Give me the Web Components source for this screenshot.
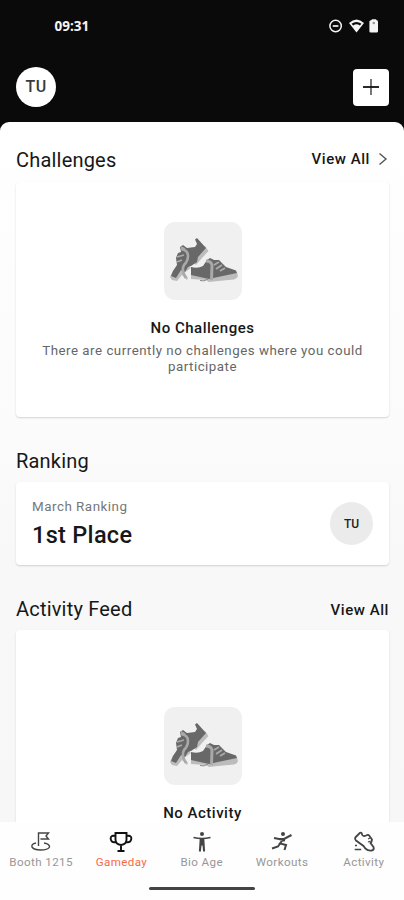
<!DOCTYPE html>
<html lang="en">
<head>
<meta charset="utf-8">
<title>Gameday</title>
<style>
html,body{margin:0;height:900px;overflow:hidden;background:#0a0a0a}
body{font-family:Roboto,"Liberation Sans",sans-serif;color:#171717}
</style>
</head>
<body>
<game-app></game-app>
<script>
const define = (name, css, html) => customElements.define(name, class extends HTMLElement {
  constructor() {
    super();
    const markup = typeof html === 'function' ? html(this) : html;
    this.attachShadow({mode: 'open'}).innerHTML = `<style>*{box-sizing:border-box}${css}</style>${markup}`;
  }
});

define('status-bar', `
:host{display:flex;height:53px;padding:0 25px 1px 54.500px;align-items:center;justify-content:space-between;color:#f4f4f4}
time{font:700 13.500px/16px "Open Sans",sans-serif;letter-spacing:0}
svg{display:block}
`, `<time>09:31</time>
<svg width="51" height="16" viewBox="0 0 51 16" fill="none" stroke="#f4f4f4">
<circle cx="7.600" cy="8" r="5.700" stroke-width="1.500"/><path d="M4.800 8h5.600" stroke-width="1.700"/>
<path d="M21 5.100Q28.500 -2 36 5.100L28.500 14.500Z" fill="#f4f4f4" stroke="none"/>
<path d="M23.500 5.800Q28.500 2.200 33.500 5.800L31.800 7.500Q28.500 5.200 25.200 7.500Z" fill="#0a0a0a" stroke="none"/>
<path d="M42.500 3q1-1 2-1v-.8h4.500V2q1.800 0 1.800 1.800v9.400q0 1.300-1.300 1.300h-6q-1.300 0-1.300-1.300V3Z" fill="#f4f4f4" stroke="none" transform="translate(-.8 0)"/>
<circle cx="45.800" cy="5" r="1.300" fill="#999" stroke="none"/></svg>`);

define('user-avatar', `
:host{display:grid;place-items:center;border-radius:50%;width:40px;height:40px;background:#fff;color:#3a3a3a;font:500 16px/20px Roboto,sans-serif;letter-spacing:.3px}
:host([small]){width:43px;height:43px;background:#ebebeb;font-size:12px;letter-spacing:0;color:#222}
`, `<slot></slot>`);

define('top-bar', `
:host{display:flex;height:69px;padding:14px 15px 15px 16px;justify-content:space-between;align-items:center}
button{width:36px;height:37px;border:0;border-radius:4px;background:#fff;padding:0;display:grid;place-items:center}
`, `<user-avatar>TU</user-avatar><button aria-label="Add"><svg width="18" height="18" viewBox="0 0 18 18"><path d="M9 1v16" stroke="#777" stroke-width="2"/><path d="M1 9h16" stroke="#111" stroke-width="1.800"/></svg></button>`);

define('section-head', `
:host{display:flex;justify-content:space-between;align-items:center;height:28px;padding:0 15px 0 16px}
h2{margin:0;font:400 20px/28px Roboto,sans-serif;letter-spacing:.2px}
a{display:flex;align-items:center;font:500 15px/20px Roboto,sans-serif;letter-spacing:.55px;gap:8px;margin-top:2px}
:host([link=arrow]) a{margin-top:-2px}
svg{display:block}
`, el => `<h2><slot></slot></h2>${el.hasAttribute('link') ? `<a>View All${el.getAttribute('link') === 'arrow' ? '<svg width="11" height="14" viewBox="0 0 11 14"><path d="M1.500 1.500L8 7L1.500 12.500" fill="none" stroke="#555" stroke-width="1.400"/></svg>' : ''}</a>` : ''}`);

define('shoe-art', `
:host{display:grid;place-items:center;width:78px;height:78px;border-radius:11px;background:#f0f0f0}
svg{display:block}
`, `<svg width="78" height="78" viewBox="0 0 78 78">
<path d="M41 24L44.500 29L38 36L32 43L28 39ZM9 49L6 55L8 58L13 59L18 53L23 58L24 56L20 51L27 46L18 38Z" fill="#bdbdbd"/>
<path d="M31 17.500L33 16L42 26L34 35L33 40L27 44L24 45L21 50L17 48L12 56L7 54L9 49L13 43L12 36L14 31L17 30L16 25L19 23L23 26L31 25L33 22Z" fill="#686868"/>
<path d="M17 27Q24 28 24 34Q24 39 20 43Q17 48 22 56" fill="none" stroke="#a9a9a9" stroke-width="2.600"/>
<path d="M13 35L20 33M13 40L18 38M17 25L21 27" stroke="#aaa" stroke-width="1.800"/>
<path d="M27 52L53 54L73 50.500L74 54Q73 57 70 57.500L54 59L45 60L42 58L27 57Z" fill="#bcbcbc"/>
<path d="M27 45Q34 47 39 44L43 38L46 36L50 38L55 38L62 45L72 48.500L73 51L54 55L45 57L27 53Z" fill="#686868"/>
<path d="M42 39Q47 39 48 43L47.500 58" fill="none" stroke="#a9a9a9" stroke-width="3"/>
<path d="M50 43L55 40M52 47L58 43M56 49L61 46" stroke="#aaa" stroke-width="1.900"/>
<path d="M36 58.500Q40 60 44 57" stroke="#888" fill="none"/></svg>`);

define('surface-card', `
:host{display:block;margin:0 15px 0 16px;background:#fff;border-radius:4px;box-shadow:0 1px 2px rgba(0,0,0,.16)}
`, `<slot></slot>`);

define('empty-state', `
:host{display:flex;flex-direction:column;align-items:center;text-align:center}
h3{margin:18px 0 0;font:500 15px/20px Roboto,sans-serif;letter-spacing:.5px}
p{margin:5px 20px 0;font:400 13.300px/16px Roboto,sans-serif;letter-spacing:.52px;color:#666}
`, `<shoe-art></shoe-art><h3><slot name="title"></slot></h3><p><slot></slot></p>`);

define('rank-row', `
:host{display:flex;height:83px;padding:0 16px;align-items:center;justify-content:space-between}
small{display:block;font:400 13.400px/18px Roboto,sans-serif;letter-spacing:.5px;color:#777}
b{display:block;font:500 23.500px/28px Roboto,sans-serif;letter-spacing:.3px;margin-top:5px}
`, `<div><small><slot name="period"></slot></small><b><slot></slot></b></div><user-avatar small>TU</user-avatar>`);

const icons = {
  flag: '<path d="M9.500 15V2h10l-2.500 3L19.500 8h-8M9.500 2v13M7 12Q2 13 3 16Q5 19 11.500 19Q19 19 20.500 16Q21 13 15 12"/>',
  cup: '<path d="M6.500 2h11v6.500q0 5-5.500 5.500q-5.500-.5-5.500-5.500ZM6.500 4.500L3 5q-2 1-1 4q1 3 5 2M17.500 4.500L21 5q2 1 1 4q-1 3-5 2M12 14v6M8.500 20h7" stroke-width="1.900"/>',
  person: '<circle cx="12" cy="3" r="2" fill="#444" stroke="none"/><path d="M3.500 6.500Q12 8.500 20.500 6.500" stroke-width="1.600"/><path d="M9.700 7.500h4.600l.8 13h-2l-.6-6h-1l-.6 6h-2Z" fill="#444" stroke="none"/>',
  run: '<circle cx="13" cy="3" r="2" fill="#444" stroke="none"/><path d="M4 7L9 8L14 8L21.500 4M13 8.500L10 12.500L16 14L14.500 19M10 12.500L8 15.500L2 17.500M9 8L15 9.500" stroke-width="2"/>',
  shoe: '<path d="M3.300 6.500L8 1.800Q10 1 10 3.500Q11 6 14 4.500Q16.500 3 17.500 5L20 8.500Q20 10.500 18.500 12L21.500 16Q22.500 18.500 20 19.500Q16 20 13.300 17.500L11.500 15L4 9.500Q2.500 8 3.300 6.500Z" stroke-width="1.800"/><path d="M16 8L18 7M16 11L18.500 10" stroke-width="1.100"/><path d="M3 14.500h2M2.700 18.500h6.500" stroke-width="1.700"/>'
};
define('nav-item', `
:host{display:flex;flex:1;flex-direction:column;align-items:center;color:#979797;font:400 11.600px/14px Roboto,sans-serif;letter-spacing:.4px;white-space:nowrap}
:host([active]){color:#f56b4a}
svg{display:block;margin-bottom:2px;fill:none;stroke:#444;stroke-width:1.400}
:host([active]) svg{stroke:#111}
`, el => `<svg width="24" height="22" viewBox="0 0 24 22">${icons[el.getAttribute('icon')]}</svg><slot></slot>`);

define('bottom-nav', `
:host{display:flex;flex-direction:column;height:78px;background:#fefefe;padding-top:8.500px;align-items:center}
nav{display:flex;width:404px;height:55.500px;padding-left:1px}
nav-item:last-child{padding-left:1.500px}
i{display:block;width:106px;height:3.500px;margin-top:.5px;border-radius:2px;background:#444}
`, `<nav><nav-item icon="flag">Booth 1215</nav-item><nav-item icon="cup" active>Gameday</nav-item><nav-item icon="person">Bio Age</nav-item><nav-item icon="run">Workouts</nav-item><nav-item icon="shoe">Activity</nav-item></nav><i></i>`);

define('game-app', `
:host{display:flex;flex-direction:column;width:404px;height:900px;background:#0a0a0a}
main{flex:1;min-height:0;overflow:hidden;border-radius:9px 9px 0 0;background:linear-gradient(#fff 0,#fdfdfd 120px,#fbfbfb 310px,#f8f8f8 430px,#f7f7f7);padding-top:24px}
.challenge{height:235px;padding-top:40px;margin-top:8px}
.rank{margin-top:7px}
.feed{height:300px;padding-top:77px;margin-top:7px}
.second{margin-top:30px}
.third{margin-top:30px}
`, `<status-bar></status-bar><top-bar></top-bar>
<main>
<section-head link="arrow">Challenges</section-head>
<surface-card class="challenge"><empty-state><span slot="title">No Challenges</span>There are currently no challenges where you could participate</empty-state></surface-card>
<section-head class="second">Ranking</section-head>
<surface-card class="rank"><rank-row><span slot="period">March Ranking</span>1st Place</rank-row></surface-card>
<section-head class="third" link>Activity Feed</section-head>
<surface-card class="feed"><empty-state><span slot="title">No Activity</span></empty-state></surface-card>
</main>
<bottom-nav></bottom-nav>`);
</script>
</body>
</html>
